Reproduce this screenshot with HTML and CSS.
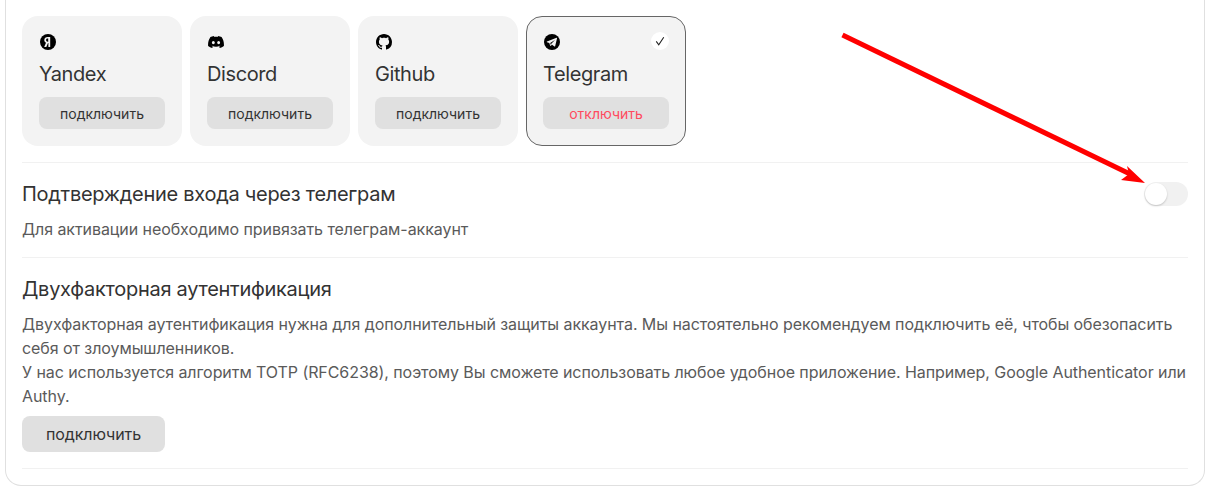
FILE: index.html
```html
<!DOCTYPE html>
<html lang="ru">
<head>
<meta charset="utf-8">
<title>Безопасность</title>
<link rel="stylesheet" href="styles.css">
</head>
<body>
<main class="panel">
  <section class="providers">
    <article class="card">
      <svg class="icon" viewBox="0 0 16 16"><circle cx="8" cy="8" r="8" fill="#000"/><path d="M10.200 3H7.800C5.700 3 4.300 4.200 4.300 6c0 1.300.7 2.200 1.700 2.700L4.200 13h2.100l1.700-4h.4v4h1.800zM8.200 7.700h-.4c-1 0-1.700-.5-1.700-1.700s.7-1.600 1.700-1.600h.4z" fill="#f3f3f3" fill-rule="evenodd"/></svg>
      <h3 class="card-name">Yandex</h3>
      <button class="btn btn-card">подключить</button>
    </article>
    <article class="card">
      <svg class="icon" viewBox="0 0 16 16"><path d="M13.550 3.050A13 13 0 0 0 10.300 2l-.4.8a12 12 0 0 0-3.800 0L5.700 2a13 13 0 0 0-3.250 1.050C.4 6.100-.15 9.050.12 12a13 13 0 0 0 4 2l.85-1.350c-.46-.17-.9-.38-1.320-.63l.33-.25a9.300 9.300 0 0 0 8.040 0l.33.250c-.42.25-.86.46-1.320.63l.85 1.350a13 13 0 0 0 4-2c.32-3.400-.55-6.330-2.330-8.950zM5.350 10.200c-.8 0-1.450-.73-1.450-1.630s.63-1.640 1.450-1.640 1.470.74 1.450 1.640-.64 1.630-1.450 1.630zm5.300 0c-.8 0-1.450-.73-1.450-1.630s.63-1.640 1.450-1.640 1.470.74 1.450 1.640-.64 1.630-1.450 1.630z" fill="#000" fill-rule="evenodd"/></svg>
      <h3 class="card-name">Discord</h3>
      <button class="btn btn-card">подключить</button>
    </article>
    <article class="card">
      <svg class="icon" viewBox="0 0 16 16"><path d="M8 0C3.580 0 0 3.580 0 8c0 3.540 2.290 6.530 5.470 7.590.4.070.55-.17.55-.38 0-.19-.01-.82-.01-1.490-2.010.37-2.530-.49-2.690-.94-.09-.23-.48-.94-.82-1.130-.28-.15-.68-.52-.01-.53.630-.01 1.080.58 1.230.82.720 1.210 1.870.87 2.330.66.070-.52.280-.87.510-1.070-1.780-.2-3.640-.89-3.640-3.950 0-.87.310-1.590.820-2.150-.08-.2-.36-1.020.08-2.120 0 0 .67-.21 2.200.82.640-.18 1.320-.27 2-.27s1.360.09 2 .27c1.530-1.040 2.200-.82 2.200-.82.440 1.100.160 1.920.080 2.120.51.560.820 1.270.820 2.150 0 3.070-1.870 3.750-3.650 3.950.29.250.54.730.54 1.480 0 1.070-.01 1.930-.01 2.200 0 .21.150.46.550.38A8.010 8.010 0 0 0 16 8c0-4.420-3.580-8-8-8z" fill="#000"/></svg>
      <h3 class="card-name">Github</h3>
      <button class="btn btn-card">подключить</button>
    </article>
    <article class="card card-active">
      <svg class="icon" viewBox="0 0 16 16"><circle cx="8" cy="8" r="8" fill="#000"/><path d="M12.600 3.700 3 7.600c-.4.160-.4.500 0 .62l2.300.72.900 2.800c.1.300.35.320.56.130l1.300-1.200 2.450 1.800c.3.170.55.080.63-.28l1.900-8c.1-.4-.16-.6-.44-.49zM6.200 9.100l5-3.300-3.900 3.900-.3 1.500z" fill="#f3f3f3"/></svg>
      <span class="check"><svg class="check-mark" viewBox="0 0 12 12"><path d="M1.500 6.500 4.500 10.500 10.500 1.500" fill="none" stroke="#1f1f1f" stroke-width="1.300"/></svg></span>
      <h3 class="card-name">Telegram</h3>
      <button class="btn btn-card btn-danger">отключить</button>
    </article>
  </section>

  <section class="row row-telegram">
    <div class="row-text">
      <h2 class="row-title">Подтверждение входа через телеграм</h2>
      <p class="row-desc">Для активации необходимо привязать телеграм-аккаунт</p>
    </div>
    <span class="toggle"><span class="toggle-knob"></span></span>
  </section>

  <section class="row row-2fa">
    <div class="row-text">
      <h2 class="row-title">Двухфакторная аутентификация</h2>
      <p class="row-desc">Двухфакторная аутентификация нужна для дополнительный защиты аккаунта. Мы настоятельно рекомендуем подключить её, чтобы обезопасить себя от злоумышленников.<br>У нас используется алгоритм TOTP (RFC6238), поэтому Вы сможете использовать любое удобное приложение. Например, Google Authenticator или Authy.</p>
      <button class="btn btn-wide">подключить</button>
    </div>
  </section>
</main>
<svg class="arrow" viewBox="0 0 1211 494" aria-hidden="true">
  <path class="arrow-line" d="M842.500 35 1130 174"/>
  <path class="arrow-head" d="M1145 183 1127 166 1129 174 1121 180z"/>
</svg>
</body>
</html>
```
FILE: styles.css
```css
* { box-sizing: border-box; }
html, body { margin: 0; padding: 0; background: #fff; }
body {
  width: 1211px;
  height: 494px;
  overflow: hidden;
  position: relative;
  font-family: Inter, "Noto Sans", sans-serif;
  color: #2b2b2b;
}
.panel {
  width: 1200px;
  height: 486px;
  margin-left: 5px;
  padding: 16px 16px 0;
  border: 1px solid #e0e0e0;
  border-top: none;
  border-radius: 0 0 16px 16px;
}
.providers {
  display: flex;
  gap: 8px;
  padding-bottom: 16px;
  border-bottom: 1px solid #f1f1f1;
}
.card {
  position: relative;
  width: 160px;
  height: 130px;
  padding: 18px 17px 17px;
  background: #f3f3f3;
  border-radius: 16px;
  display: flex;
  flex-direction: column;
  align-items: flex-start;
}
.card-active {
  border: 1px solid #666;
  padding: 17px 16px 16px;
}
.icon { width: 16px; height: 16px; margin-left: 1px; display: block; }
.card-name {
  margin: 10px 0 0;
  font-size: 20px;
  line-height: 28px;
  font-weight: 400;
  letter-spacing: -.4px;
  color: #333;
}
.check {
  position: absolute;
  top: 15px;
  right: 16px;
  width: 18px;
  height: 18px;
  border-radius: 50%;
  background: #fff;
  display: flex;
  align-items: center;
  justify-content: center;
}
.check-mark { width: 10px; height: 10px; }
.btn {
  border: none;
  background: #e0e0e0;
  font-family: inherit;
  color: #333;
  padding: 0;
}
.btn-card {
  margin-top: auto;
  width: 126px;
  height: 32px;
  border-radius: 8px;
  font-size: 14px;
}
.btn-danger { color: #ff4a5e; }
.btn-wide {
  display: block;
  width: 143px;
  height: 36px;
  border-radius: 8px;
  font-size: 16px;
  letter-spacing: -.08px;
  margin-top: 8px;
}
.row {
  display: flex;
  justify-content: space-between;
  align-items: flex-start;
  border-bottom: 1px solid #f1f1f1;
  padding-top: 17px;
}
.row-telegram { height: 95px; }
.row-2fa { height: 211px; }
.row-title {
  margin: 0;
  font-size: 20px;
  line-height: 28px;
  font-weight: 400;
  letter-spacing: -.28px;
  color: #333;
}
.row-desc {
  margin: 9px 0 0;
  font-size: 16px;
  line-height: 24px;
  letter-spacing: -.07px;
  color: #5a5a5a;
}
.toggle {
  width: 44px;
  height: 24px;
  border-radius: 12px;
  background: #f1f1f1;
  display: flex;
  align-items: center;
  padding: 1px;
  margin-top: 2px;
}
.toggle-knob {
  width: 22px;
  height: 22px;
  border-radius: 50%;
  background: #fff;
  box-shadow: 0 1px 2px rgba(0,0,0,.2);
}
.arrow {
  position: absolute;
  inset: 0;
  width: 1211px;
  height: 494px;
  pointer-events: none;
}
.arrow-line { fill: none; stroke: #f00; stroke-width: 5; }
.arrow-head { fill: #f00; }
```
